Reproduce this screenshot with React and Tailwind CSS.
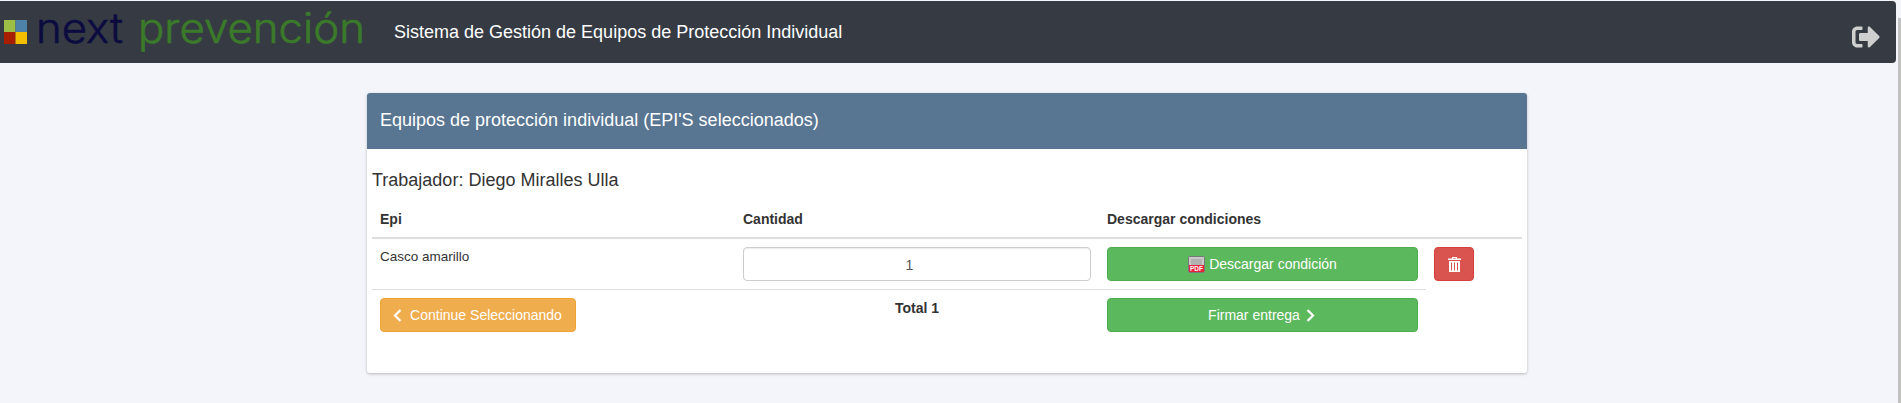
import { FaSignOutAlt } from 'react-icons/fa';

const Logo = () => (
  <svg width="370" height="62" viewBox="0 0 370 62" className="shrink-0">
    <rect x="4" y="19" width="11.5" height="12" fill="#9dbf45" />
    <rect x="15.5" y="19" width="11.5" height="12" fill="#4f82a8" />
    <rect x="4" y="31" width="11.5" height="12" fill="#a81f00" />
    <rect x="15.5" y="31" width="11.5" height="12" fill="#f4bf00" />
    <text x="36" y="42" textLength="87" lengthAdjust="spacingAndGlyphs" fontFamily="Inter, sans-serif" fontWeight="300" fontSize="41" fill="#0b0b40" stroke="#0b0b40" strokeWidth="0.6">next</text>
    <text x="138" y="42" textLength="227" lengthAdjust="spacingAndGlyphs" fontFamily="Inter, sans-serif" fontWeight="300" fontSize="41" fill="#3b7a2a" stroke="#3b7a2a" strokeWidth="0.6">prevención</text>
  </svg>
);

const PdfIcon = () => (
  <svg width="17" height="17" viewBox="0 0 17 17" className="shrink-0">
    <rect x="0.5" y="0.5" width="16" height="16" rx="1" fill="#c9c9c9" stroke="#777" />
    <path d="M3 4h11M3 6h11M3 8h11" stroke="#999" strokeWidth="1" />
    <rect x="1" y="9" width="15" height="7" fill="#e8203a" />
    <text x="8.5" y="15" textAnchor="middle" fontSize="6.5" fontWeight="700" fontFamily="Liberation Sans, sans-serif" fill="#fff">PDF</text>
  </svg>
);

const TrashIcon = () => (
  <svg width="13" height="15" viewBox="0 0 13 15" fill="#fff">
    <path d="M4 0h5v1.5h4V3H0V1.5h4zM5 1v.5h3V1z" fillRule="evenodd" />
    <path d="M1 4h11v11H1zM3 5.5v8h1v-8zM6 5.5v8h1v-8zM9 5.5v8h1v-8z" fillRule="evenodd" />
  </svg>
);

const Chevron = ({ left }) => (
  <svg width="9" height="13" viewBox="0 0 9 13" fill="none" stroke="#fff" strokeWidth="2.2" className="shrink-0">
    <path d={left ? 'M7.5 1L2 6.5L7.5 12' : 'M1.5 1L7 6.5L1.5 12'} />
  </svg>
);

export default function App() {
  return (
    <div className="relative h-[403px] overflow-hidden bg-[#f4f5fa] pt-px font-['Liberation_Sans',Arial,sans-serif] text-[14px] text-[#333]">
      {/* scrollbar thumb */}
      <div className="absolute bottom-0 right-0 top-[18px] w-[3px] bg-[#c1c1c1]" />

      {/* Navbar */}
      <nav className="flex h-[62px] w-[1896px] items-center rounded-r-[4px] bg-[#363b43]">
        <Logo />
        <span className="ml-[24px] text-lg text-white">Sistema de Gestión de Equipos de Protección Individual</span>
        <FaSignOutAlt className="ml-auto mr-[16px] mt-[10px] text-[28px] text-[#cfcfcf]" />
      </nav>

      {/* Card */}
      <div className="ml-[367px] mt-[30px] h-[280px] w-[1160px] rounded-[3px] bg-white shadow-[0_1px_3px_rgba(0,0,0,0.25)]">
        <div className="flex h-[56px] items-center rounded-t-[3px] bg-[#587591] px-[13px] pb-[2px] text-lg text-white">
          Equipos de protección individual (EPI'S seleccionados)
        </div>
        <div className="px-[5px]">
          <h4 className="mt-[21px] text-lg leading-[20px] text-[#333]">Trabajador: Diego Miralles Ulla</h4>
          <table className="mt-[10px] w-[1150px] table-fixed border-collapse">
            <colgroup>
              <col className="w-[363px]" />
              <col className="w-[364px]" />
              <col className="w-[327px]" />
              <col className="w-[96px]" />
            </colgroup>
            <thead>
              <tr className="border-b-2 border-[#ddd]">
                <th className="h-[38px] px-2 pt-[2px] text-left font-bold">Epi</th>
                <th className="px-2 pt-[2px] text-left font-bold">Cantidad</th>
                <th className="px-2 pt-[2px] text-left font-bold">Descargar condiciones</th>
                <th />
              </tr>
            </thead>
            <tbody>
              <tr>
                <td className="border-b border-[#ddd] p-2 pt-[9px] align-top text-[13.5px] leading-[18px]">Casco amarillo</td>
                <td className="border-b border-[#ddd] p-2 align-top">
                  <input
                    readOnly
                    type="number"
                    value="1"
                    className="h-[34px] w-full rounded-[4px] border border-[#ccc] bg-white pt-[2px] text-center text-[14px] text-[#555] shadow-[inset_0_1px_1px_rgba(0,0,0,0.075)] outline-none"
                  />
                </td>
                <td className="border-b border-[#ddd] p-2 align-top">
                  <button className="flex h-[34px] w-full items-center justify-center gap-[4px] rounded-[4px] border border-[#4cae4c] bg-[#5cb85c] text-white">
                    <PdfIcon />
                    Descargar condición
                  </button>
                </td>
                <td className="p-2 align-top">
                  <button className="flex h-[34px] w-[40px] items-center justify-center rounded-[4px] border border-[#d43f3a] bg-[#d9534f] text-white">
                    <TrashIcon />
                  </button>
                </td>
              </tr>
              <tr>
                <td className="p-2 align-top">
                  <button className="flex h-[34px] w-[196px] items-center justify-center gap-[8px] rounded-[4px] border border-[#eea236] bg-[#f0ad4e] pr-[1px] text-white">
                    <Chevron left />
                    Continue Seleccionando
                  </button>
                </td>
                <td className="p-2 pt-[9px] text-center align-top font-bold leading-[18px]">Total 1</td>
                <td className="p-2 align-top">
                  <button className="flex h-[34px] w-full items-center justify-center gap-[6px] rounded-[4px] border border-[#4cae4c] bg-[#5cb85c] pr-[2px] text-white">
                    Firmar entrega
                    <Chevron />
                  </button>
                </td>
                <td />
              </tr>
            </tbody>
          </table>
        </div>
      </div>
    </div>
  );
}
